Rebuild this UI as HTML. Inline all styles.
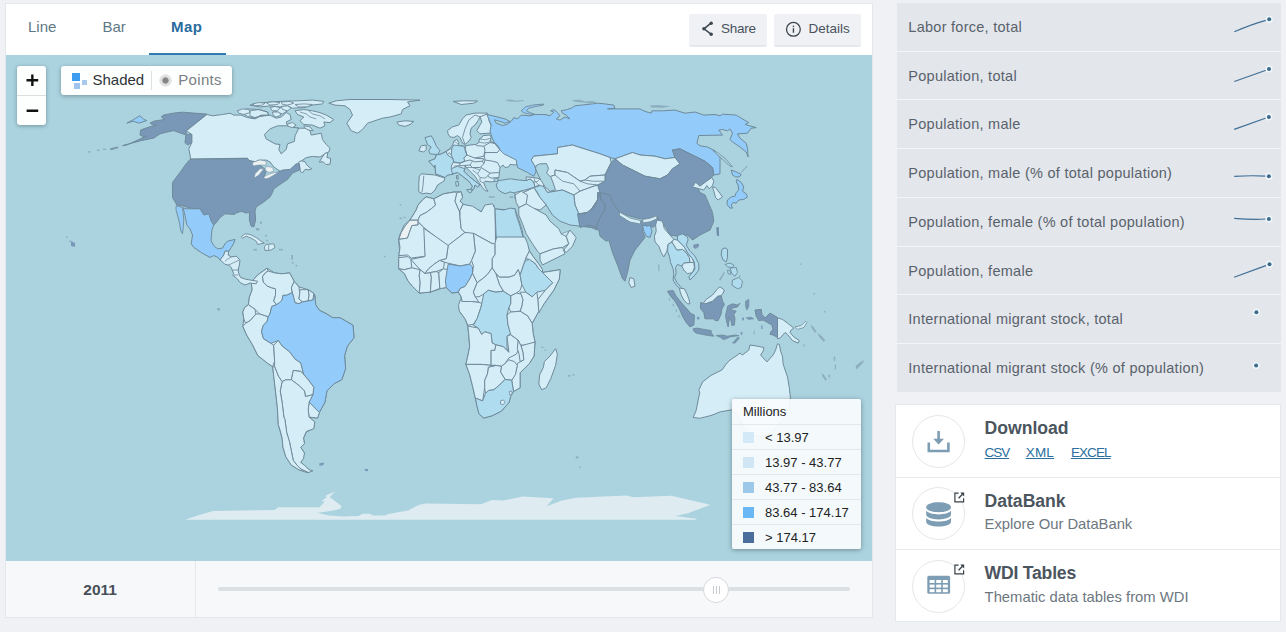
<!DOCTYPE html>
<html><head><meta charset="utf-8"><title>World Bank Data</title>
<style>
*{box-sizing:border-box;margin:0;padding:0}
html,body{width:1286px;height:632px;overflow:hidden}
body{background:#eff1f5;font-family:"Liberation Sans",sans-serif;position:relative;color:#4a5560}
.abs{position:absolute}
.t{position:absolute;white-space:nowrap;line-height:1}
#chart{position:absolute;left:5px;top:3px;width:868px;height:615px;background:#fff;border:1px solid #e3e6ea}
#map{position:absolute;left:6px;top:55px;width:866px;height:506px;background:#aad3df;overflow:hidden}
#timeline{position:absolute;left:6px;top:561px;width:866px;height:56px;background:#f7f8fa}
.btn{position:absolute;top:14px;height:33px;background:#eff1f5;border-bottom:2px solid #e4e7ec;border-radius:2px}
.row{position:absolute;left:897px;width:384px;background:#e3e6eb}
.row .t{left:11.3px;font-size:14.5px;letter-spacing:.27px;color:#59626c}
#cards{position:absolute;left:895px;top:404px;width:386px;height:218px;background:#fff;border:1px solid #e4e7eb}
.circ{position:absolute;width:53px;height:53px;border-radius:50%;border:1px solid #e3e6e9;background:#fff}
.h{font-weight:700;color:#4b555e}
.sub{font-size:14.8px;color:#6d7780}
a.l{position:absolute;white-space:nowrap;line-height:1;color:#2a6f9e;text-decoration:underline;font-size:13.5px;text-underline-offset:1px}
#legend{position:absolute;left:732px;top:399px;width:129px;height:150px;background:rgba(250,252,253,.93);box-shadow:0 1px 5px rgba(0,0,0,.35);border-radius:2px;font-size:13px;color:#222}
#legend .lr{position:absolute;left:0;width:129px;height:25px;border-top:1px solid #e3e8ec}
#legend .sw{position:absolute;left:11px;top:6.5px;width:11px;height:11px}
#legend .lt{position:absolute;left:33px;top:5.5px;white-space:nowrap;line-height:1}
</style></head><body>

<div id="chart"></div>
<div class="t" style="left:28px;top:18.6px;font-size:15px;color:#607885">Line</div>
<div class="t" style="left:102.5px;top:18.6px;font-size:15px;color:#607885">Bar</div>
<div class="t" style="left:171px;top:18.6px;font-size:15px;font-weight:700;color:#2a6c9c;letter-spacing:.5px">Map</div>
<div class="abs" style="left:149px;top:53px;width:77px;height:2px;background:#2f7ab0"></div>
<div class="btn" style="left:689px;width:78px"></div>
<div class="btn" style="left:774px;width:87px"></div>
<svg class="abs" style="left:700px;top:20px" width="16" height="18" viewBox="0 0 16 18"><g fill="#3f4850" stroke="#3f4850"><path d="M11 3.2 L4 8.8 L11 14.2" fill="none" stroke-width="1.5"/><circle cx="11.2" cy="3.3" r="1.7" stroke="none"/><circle cx="3.9" cy="8.8" r="1.7" stroke="none"/><circle cx="11.2" cy="14.2" r="1.7" stroke="none"/></g></svg>
<div class="t" style="left:721px;top:21.5px;font-size:13.5px;color:#4a535c;letter-spacing:-.25px">Share</div>
<svg class="abs" style="left:784px;top:20px" width="19" height="19" viewBox="0 0 19 19"><circle cx="9.4" cy="9.3" r="6.9" fill="none" stroke="#3f4850" stroke-width="1.3"/><rect x="8.75" y="8.2" width="1.4" height="4.6" fill="#3f4850"/><rect x="8.75" y="5.7" width="1.4" height="1.4" fill="#3f4850"/></svg>
<div class="t" style="left:808.5px;top:21.5px;font-size:13.5px;color:#4a535c">Details</div>
<div id="map">
<svg width="866" height="506" viewBox="6 55 866 506" style="position:absolute;left:0;top:0" stroke-linejoin="round">
<polygon points="426.1,196.9 422.4,200 418.1,205.1 416.2,209.9 409.9,220 404.3,224.9 399.6,235.2 398.7,239.8 399.6,251 398.7,257.6 398.7,268.8 404.3,273.4 408,280.9 412.7,286.5 419.2,293.1 430.4,292.1 441.6,288.4 446.3,287.5 451.9,293.1 458.4,292.1 461.2,296.8 460.3,307.1 459.4,311.2 465,318.6 467.8,326.1 468.7,333.6 469.7,346.7 467.8,356 465.9,364.4 469.7,374.7 472.5,385.9 475.3,398 477.1,406.4 479,413.9 483.7,418 492.1,415.8 501.4,411.1 508.9,402.7 510.7,396.2 513.5,391.5 520.1,387.8 520.1,372.8 529.4,363.5 534.1,356 535,342 533.2,333.6 532.2,323.3 538.8,311.2 544.4,303.3 553.7,290.3 559.3,279 560.2,269.7 542.5,272.5 542.5,269.7 538.8,264.1 533.2,256.6 529.4,251 526.8,243.6 523.4,237 522.3,230.5 518.6,219.3 516.7,213.7 514.9,208.4 510.7,209.9 494.9,209 493.9,205.3 486.5,206.2 481.8,211.8 473.4,208.1 463.1,204.3 459.9,201.2 462.6,197.4 461.2,191.8 454.9,191.8 443.7,193.7 433.8,198.7" fill="#d5edf7" stroke="#6f8a9a" stroke-width="1"/>
<polygon points="251.2,282.2 257.8,274.8 267.1,268.2 274.6,272.9 282.1,273.8 289.5,272.9 294.2,281.3 298.9,286.9 308.2,289.7 313.8,293.4 314.8,295.3 315.7,304.7 319.4,310.3 326.9,314 332.5,317.7 340,317.7 353,325.2 354,337.7 347.4,346.1 344.6,355.5 345.6,368.5 341.8,379.7 334.4,383.5 326.9,390.9 325,402.1 319.4,412.4 317.6,418 309.1,417.1 314.8,421.8 313.8,428.3 306.3,432 303.5,438 304.5,443.6 300.7,447.3 304.5,453 300.7,462.3 309.1,469.8 308.2,472.6 298.9,469.8 291.4,465.1 285.8,456.7 283,447.3 282.1,438 278.3,424.6 277.4,407.8 275.5,390.9 272.7,366.7 267.1,362.9 257.8,355.5 252.2,344.2 246.6,334.9 242.8,326.1 243.8,318.7 242.8,312.1 244.7,307.5 248.4,304.7 249.4,297.2 252.2,289.7" fill="#d5edf7" stroke="#6f8a9a" stroke-width="1"/>
<polygon points="206.9,114.1 182.5,112.2 173.8,113.1 163.8,115 161.2,116.9 165,119.4 153.8,121.2 150,123.1 152.5,124.8 156.2,125 147.5,127.5 140.6,130 140,135 143.1,136.5 146.2,136.2 126.9,145 122.5,145.6 141.2,140.6 153.8,138.1 160,133.8 167.5,131.9 173.8,130.6 182.5,133.8 185,134.4 191.9,134.4 191.9,142.5 187.5,145 185,142.5 186.2,133.1 186.2,130.6" fill="#7998b7" stroke="#6f8a9a" stroke-width="1"/>
<polygon points="140,115.6 143.8,119.4 146.9,120.6 138.8,123.1 133.1,121.2 126.9,123.1 133.8,119.4" fill="#93ccfa" stroke="#6f8a9a" stroke-width="1"/>
<polygon points="110,148.8 117.5,146.9 118.1,147.8 111.2,149.8" fill="#7998b7" stroke="#6f8a9a" stroke-width="0.6"/>
<polygon points="206.9,114.5 212.5,115.8 222.5,114.5 230,113.2 233.8,115.1 241.2,115.1 247.5,117.6 255,118.9 260,116.4 270,115.1 276.2,118.2 281.2,117 286.2,112.6 290,114.5 291.2,119.5 286.2,122 287.5,125.8 295,127.6 298.8,128.2 306.2,128.2 310,130.8 311.2,135.1 317.5,133.9 321.2,133.2 322.5,139.5 326.2,144.5 330,148.2 328.8,152 323.8,154.5 320,157 312.5,156.4 306.2,157.6 300,162 298.8,163.2 300,167 291.9,172 281.2,172 273.8,167 270,162 266.2,160.1 258.8,160.1 255,162 248.8,160.8 247.5,158.2 190.6,159 190,155 188.8,148.8 191.9,142.5 191.9,134.4 186.2,131" fill="#d5edf7" stroke="#6f8a9a" stroke-width="1"/>
<polygon points="277.5,125.8 270,128.9 264.4,134.5 266.2,138.9 275,143.9 280,144.5 278.8,149.5 281.2,153.9 286.2,149.5 287.5,143.9 294.4,141.4 295,135.8 298.8,128.2 295,127.6 287.5,125.8" fill="#aad3df" stroke="#6f8a9a" stroke-width="1"/>
<polygon points="237.5,110.8 247.5,108.9 258.8,109.5 267.5,112 268.8,115.1 261.2,115.1 255,118.2 247.5,116.4 241.2,112.6" fill="#d5edf7" stroke="#6f8a9a" stroke-width="1"/>
<polygon points="250,105.1 260,103.2 270,102 280,101.4 297.5,100.8 312.5,100.1 323.8,101.4 322.5,103.9 312.5,105.1 303.8,107.6 292.5,108.2 287.5,105.8 280,107 270,105.8 260,107" fill="#d5edf7" stroke="#6f8a9a" stroke-width="1"/>
<polygon points="295,110.8 303.8,109.5 312.5,110.8 320,112.6 326.2,115.1 333.8,119.5 330,122.6 323.8,122 325,125.8 320,128.2 312.5,125.1 303.8,124.5 300,120.8 303.8,117 297.5,114.5" fill="#d5edf7" stroke="#6f8a9a" stroke-width="1"/>
<polygon points="275,108.2 282.5,107.6 287.5,110.8 282.5,113.9 276.2,112" fill="#d5edf7" stroke="#6f8a9a" stroke-width="1"/>
<polygon points="321.7,158 325,153.2 327.9,152.7 326.9,157.5 330.7,158.4 330.2,164.1 326,164.6 323.1,161.7 319.3,162.2" fill="#d5edf7" stroke="#6f8a9a" stroke-width="1"/>
<polygon points="298.5,162.2 301.3,160.8 305.1,161.7 306.5,164.6 309.4,167.4 311.7,168.9 308.9,169.8 305.1,169.3 302.7,172.7 300.4,171.7 299.9,167.4" fill="#d5edf7" stroke="#6f8a9a" stroke-width="1"/>
<polygon points="190,159.4 247.5,158.5 249.4,160.6 256.2,161.9 262.5,166.9 264.4,168.8 266.2,171.9 263.8,176.9 266.2,178.8 272.5,175 277.5,172.5 282.5,170 290,169.4 296.2,163.8 299.4,163.8 299.4,170 292.5,173.1 287.5,179.4 280,184.4 273.8,188.8 272.5,192.5 270,196.9 263.8,201.9 256.2,206.9 255,211.2 255.6,220 253.8,226.9 251.2,226.2 249.4,220 249.4,211.9 246.2,213.1 241.2,211.2 236.2,213.1 234.4,214.4 225,213.8 220,217.5 216.2,222.5 213.8,225 211.2,223.1 208.8,215.6 203.8,215 200,208.8 190,208.1 183.8,206.2 176.9,205 172.5,197.5 172.5,182.5 180,172.5 186.2,163.8" fill="#7998b7" stroke="#6f8a9a" stroke-width="1"/>
<polygon points="252.5,162.5 260,160 266.2,161.2 266.2,165 258.8,165 253.1,166" fill="#ebf1f3" stroke="#6f8a9a" stroke-width="0.5"/>
<polygon points="255,173.8 260,168.8 263.8,168.8 258.8,175 254.4,178.1" fill="#ebf1f3" stroke="#6f8a9a" stroke-width="0.5"/>
<polygon points="266.2,166.2 272.5,167.5 273.8,171.2 268.8,172.5 265,170" fill="#ebf1f3" stroke="#6f8a9a" stroke-width="0.5"/>
<polygon points="263.8,176.9 270,173.8 277.5,171.9 276.2,173.8 268.8,178.1 265,179" fill="#ebf1f3" stroke="#6f8a9a" stroke-width="0.5"/>
<polygon points="328.8,103.2 336.2,100.8 350,99.5 390,99.5 420,100.1 407.5,102 410,105.8 402.5,109.5 401.2,113.9 390,117 382.5,118.2 367.5,123.2 362.5,129.5 357.5,133.2 351.2,130.8 346.9,123.2 352.5,115.1 350,109.5 345,105.8 335,105.1" fill="#d5edf7" stroke="#6f8a9a" stroke-width="1"/>
<polygon points="396.9,122 405,120.8 413.8,121.4 410,124.5 405,126.4 398.8,125.1" fill="#d5edf7" stroke="#6f8a9a" stroke-width="1"/>
<polygon points="453.1,101.4 463.8,100.8 477.5,101 473.8,103.2 461.2,104.5" fill="#d5edf7" stroke="#6f8a9a" stroke-width="1"/>
<polygon points="425,137.6 431.2,135.8 433.8,140.1 436.2,145.8 440,150.8 437.5,154.5 430,153.9 428.8,150.8 431.2,147 427.5,144.5 426.2,140.8" fill="#b0dcf0" stroke="#6f8a9a" stroke-width="1"/>
<polygon points="418.8,150.8 421.2,145.8 426.2,145.1 426.2,149.5 423.8,152" fill="#d5edf7" stroke="#6f8a9a" stroke-width="1"/>
<polygon points="447.5,130.6 452.5,126.9 458.8,125 462.5,118.8 466.2,115 475,113.1 487.5,113.1 485,116.2 480,116.9 478.1,120.6 475,125 471.2,128.1 470,133.8 471.2,137.5 468.8,141.2 465,144.4 462.5,143.1 460,137.5 457.5,135.6 453.8,137.5 450,136.9 448.1,133.8" fill="#d5edf7" stroke="#6f8a9a" stroke-width="1"/>
<polygon points="480,116.9 487.5,113.8 490,116.2 488.8,120 492.5,128.8 490,133.1 480,133.8 476.9,130.6 480,125 481.9,121.9" fill="#d5edf7" stroke="#6f8a9a" stroke-width="1"/>
<polygon points="428.8,161.2 435,158.8 436.2,155 441.2,154 446.2,151.2 451.2,147.5 453.1,143.8 453.8,141.2 456.9,139.4 458.8,142.5 458.1,145.6 463.8,146.2 468.8,145.2 476.2,144.4 478.8,142.5 479.4,138.8 481.9,137.5 483.1,135.6 490,135 491.2,137.5 490,141.2 495,143.1 500,148.8 502.5,151.2 510,153.8 517.5,158.1 518.8,161.2 516.2,165 510,164.4 508.8,166.9 505,167.5 503.1,165 500,167.5 499.4,172.5 499,177.5 497.5,178.8 498.1,180.6 491.2,181.9 485,181.2 483.8,183.1 486.2,188.8 488.1,191.2 485,190.6 482.5,187.5 480,183.8 478.1,181.2 475,176.2 471.2,172.5 466.2,167.5 465,165 465,168.8 463.8,171.2 468.8,176.2 475,181.2 480,185 477.5,186.9 475,185 473.8,188.8 470,191.2 472.5,186.2 468.8,181.2 462.5,176.2 457.5,172.5 452.5,173.8 447.5,175 445,177.5 435.6,173.8 435,165 434.4,167.5" fill="#d5edf7" stroke="#6f8a9a" stroke-width="1"/>
<polygon points="428.8,161.2 435,158.8 436.2,155 441.2,154 446.2,151.5 447.5,155 451.2,157.5 453.8,160 453.1,162.5 451.2,166.2 452.5,170 453.1,174.4 447.5,175 445,177.5 435.6,173.8 435,165 434.4,167.5" fill="#b0dcf0" stroke="#6f8a9a" stroke-width="1"/>
<polygon points="451.9,148.1 453.8,145 458.1,145.6 463.8,146.2 465.6,150 466.9,155 463.8,158.1 465,161.2 460,163.1 453.8,161.9 453.1,158.8 451.2,155" fill="#b0dcf0" stroke="#6f8a9a" stroke-width="1"/>
<polygon points="452.5,173.8 451.2,168.8 457.5,166.2 465,168.8 463.8,171.2 468.8,176.2 475,181.2 480,185 477.5,186.9 475,185 473.8,188.8 470,191.2 472.5,186.2 468.8,181.2 462.5,176.2 457.5,172.5" fill="#b0dcf0" stroke="#6f8a9a" stroke-width="1"/>
<polygon points="466.9,189.4 472.5,190 470.6,193.1 467.5,191.2" fill="#b0dcf0" stroke="#6f8a9a" stroke-width="1"/>
<polygon points="455.6,181.9 458.1,181.2 458.8,185.6 456.2,186.2" fill="#b0dcf0" stroke="#6f8a9a" stroke-width="1"/>
<polygon points="456.5,175.6 458.1,175.6 458.1,179.4 456.5,178.8" fill="#b0dcf0" stroke="#6f8a9a" stroke-width="1"/>
<polygon points="419.4,176.2 421.2,173.8 435,175 445,178.1 443.8,181.2 437.5,185 435,190 431.2,193.8 426.2,193.1 422.5,193.8 418.8,191.9 418.8,182.5" fill="#d5edf7" stroke="#6f8a9a" stroke-width="1"/>
<polygon points="486.9,114.5 495,116.4 505,118.9 510,121.4 505,123.2 498.8,121 494.4,119.8 496.2,123.2 502.5,125.5 506.9,124.5 511.2,121.4 513.8,117.6 517.5,118.9 521.2,115.1 530,115.8 535,114.5 538.8,114.5 545,114.5 550,115.8 553.8,112 550.6,110.8 553.8,109.5 557.5,112.6 560,115.8 556.2,118.9 560,120.1 565,117 570,118.9 566.2,115.1 562.5,113.2 561.2,110.8 567.5,109.5 572.5,107.6 575,105.8 592.5,103.9 597.5,103.2 605,103.9 613.8,105.1 615,108.2 607.5,108.9 640,108.9 645,111.4 651.2,113.2 651.9,110.8 662.5,110.8 675,110.1 685,113.2 695,112 703.8,115.1 715,114.5 720,115.8 722.5,114.2 736.2,115.1 741.2,118.2 748.8,122.6 745,124.5 756.2,127.6 751.2,128.2 747.5,133.2 737.5,133.9 740,138.2 746.2,143.2 747.5,148.2 748.1,157 746.2,152 740,147 732.5,142 730,139.5 732.5,133.2 730,128.9 727.5,130.8 722.5,129.5 718.8,130.1 722.5,135.1 698.8,135.5 696.9,143.2 700,145.8 707.5,147 715,150.8 720,157.5 720,173.8 713.8,175 712.5,167.5 705,161.2 692.5,155 680,148.8 672.5,150 675,157.5 665,158.8 655,156.2 640,155 632.5,152.5 615,158.8 610,157.5 600,153.8 580,147.5 572.5,145 557.5,147.5 557.5,153.8 533.8,156.2 531.2,160 535,166.2 536.2,171.2 533.8,176.2 527.5,172.5 517.5,167.5 516.2,160 503.8,153.8 500,150 495,143.8 492.5,138.8 490,131.2 491.2,125" fill="#93ccfa" stroke="#6f8a9a" stroke-width="1"/>
<polygon points="533.8,156.2 557.5,153.8 557.5,147.5 572.5,145 580,147.5 600,153.8 610,157.5 611.2,162.5 607.5,170 605,175 590,176.2 585,180 580,181.2 567.5,172.5 555,170 555,175 547.5,177.5 542.5,171.2 536.2,171.2 535,166.2 531.2,160" fill="#d5edf7" stroke="#6f8a9a" stroke-width="1"/>
<polygon points="615,158.8 632.5,152.5 640,155 655,156.2 665,158.8 675,157.5 680,163.8 672.5,168.8 667.5,175 660,178.8 645,176.2 635,171.2 622.5,165" fill="#d5edf7" stroke="#6f8a9a" stroke-width="1"/>
<polygon points="611.2,162.5 615,158.8 622.5,165 635,171.2 645,176.2 660,178.8 667.5,175 672.5,168.8 680,163.8 675,157.5 672.5,150 680,148.8 692.5,155 705,161.2 712.5,167.5 713.8,175 710,178.8 702.5,185 697.5,187.5 700,192.5 705,195 712.5,212.5 713.8,221.2 710,230 700,235 692.5,240 687.5,235 677.5,236.2 670,235 665,226.2 660,222.5 655,216.2 650,220 640,218.8 630,216.2 620,212.5 613.8,205 607.5,197.5 600,192.5 597.5,185 605,181.2 605,175 607.5,170" fill="#7998b7" stroke="#6f8a9a" stroke-width="1"/>
<polygon points="542.5,171.2 547.5,177.5 555,175 555,170 567.5,172.5 580,181.2 585,180 590,176.2 605,175 605,181.2 597.5,185 590,187.5 580,191.2 573.8,195 562.5,190 547.5,192.5 542.5,185 545,177.5" fill="#d5edf7" stroke="#6f8a9a" stroke-width="1"/>
<polygon points="573.8,195 580,191.2 590,187.5 597.5,185 600,192.5 597.5,200 592.5,207.5 587.5,212.5 578.8,213.8 575,205" fill="#d5edf7" stroke="#6f8a9a" stroke-width="1"/>
<polygon points="533.8,187.5 542.5,185 547.5,192.5 562.5,190 573.8,195 575,205 578.8,213.8 580,226.2 570,225 560,221.2 552.5,215 546.2,205 540,197.5 537.5,192.5" fill="#b0dcf0" stroke="#6f8a9a" stroke-width="1"/>
<polygon points="578.8,213.8 587.5,212.5 592.5,207.5 597.5,200 597.5,192.5 600,192.5 605,200 603.8,210 605,217.5 598.8,223.8 597.5,230 591.2,227.5 580,226.2" fill="#7998b7" stroke="#6f8a9a" stroke-width="1"/>
<polygon points="498.1,180.6 502.5,180 510,178.8 518.8,180 526.2,180.6 530,178.8 533.8,181.9 535,186.9 533.1,191.2 526.2,191.9 520,192.5 515,193.1 510,191.9 505,193.8 500,191.2 497.5,188.8 496.2,185 497.5,182.5" fill="#b0dcf0" stroke="#6f8a9a" stroke-width="1"/>
<polygon points="494,178.8 497.5,178.5 498.1,180.6 496.2,181.5 494,180.6" fill="#b0dcf0" stroke="#6f8a9a" stroke-width="0.8"/>
<polygon points="520,193.8 533.8,187.5 540,197.5 546.2,205 540,210 530,207.5 522.5,201.2" fill="#d5edf7" stroke="#6f8a9a" stroke-width="1"/>
<polygon points="515,192.5 525,190 533.8,187.5 520,193.8 517.5,200 515,198.8" fill="#d5edf7" stroke="#6f8a9a" stroke-width="1"/>
<polygon points="521.2,110.8 525.6,106.8 533.8,104.9 543.8,104.1 543.1,105.2 535,106.6 528.1,108.5 526.5,110.8 530,112.6 535,114.5 530,114.1 523.8,112.8" fill="#93ccfa" stroke="#6f8a9a" stroke-width="0.9"/>
<polygon points="505,100.1 511.2,99.5 516.2,100.8 522.5,100.1 524.4,101 517.5,101.8 508.8,101.4" fill="#8eaebf"/>
<polygon points="571.2,100.1 580,99.8 585,101.4 592.5,101 597.5,102.6 590,103.6 582.5,102.6 575,101.8" fill="#8eaebf"/>
<polygon points="650,105.5 657.5,105 671.2,106.2 662.5,107.8 651.2,107.5" fill="#8eaebf"/>
<polygon points="577.5,213.8 585,213.8 593.8,207.5 597.5,200 600,192.5 601.2,200 605,203.8 605,210 600,217.5 596.2,227.5 588.8,225 580,227.5" fill="#7998b7" stroke="#6f8a9a" stroke-width="1"/>
<polygon points="600,192.5 610,195 612.5,202.5 620,212.5 630,218.8 640,221.2 650,220 657.5,216.2 658.8,220 656.2,225 652.5,227.5 650,225 647.5,227.5 643.8,225 642.5,231.2 645,237.5 640,243.8 635,250 630,260 627.5,272.5 625,281.2 622.5,278.8 617.5,265 612.5,252.5 608.8,240 606.2,241.2 600,236.2 598.8,230 596.2,227.5 600,217.5 605,210 605,203.8 601.2,200" fill="#7998b7" stroke="#6f8a9a" stroke-width="1"/>
<polygon points="619.5,212 630,218 640.5,220.5 640.5,224 630,222 619.5,215.5" fill="#d5edf7" stroke="#6f8a9a" stroke-width="0.8"/>
<polygon points="642.5,219.5 650,218.2 656.8,215.8 656.8,219 650,221.8 643.2,223" fill="#d5edf7" stroke="#6f8a9a" stroke-width="0.8"/>
<polygon points="642.5,225 647.5,226.2 650,225 652,231.2 650,237.5 646.2,236.2 643.8,231.2" fill="#93ccfa" stroke="#6f8a9a" stroke-width="1"/>
<polygon points="630,277.5 633.8,278.8 635,286.2 631.2,287.5 628.8,282.5" fill="#d5edf7" stroke="#6f8a9a" stroke-width="1"/>
<polygon points="518.8,207.5 526.2,203.8 532.5,207.5 546.2,215 550,221.2 558.8,228.8 561.2,233.8 566.2,236.2 568.8,243.8 562.5,247.5 553.8,248.8 540,253.8 537.5,251.2 532.5,243.8 526.2,233.8 522.5,223.8 518.8,215" fill="#d5edf7" stroke="#6f8a9a" stroke-width="1"/>
<polygon points="540,253.8 553.8,248.8 562.5,247.5 565,253.8 550,261.2 542.5,265 540,260" fill="#d5edf7" stroke="#6f8a9a" stroke-width="1"/>
<polygon points="568.8,243.8 566.2,236.2 570,230 576.2,237.5 572.5,246.2 566.2,252.5 563.8,250" fill="#d5edf7" stroke="#6f8a9a" stroke-width="1"/>
<polygon points="561.2,233.8 568.8,231.2 566.2,236.2" fill="#d5edf7" stroke="#6f8a9a" stroke-width="0.7"/>
<polygon points="515,195 521.2,191.2 527.5,195 526.2,203.8 518.8,207.5 516.2,202.5" fill="#d5edf7" stroke="#6f8a9a" stroke-width="1"/>
<polygon points="410,220 418.1,220 418.1,225 411.9,225.6 409.4,232.5 407.5,238.1 398.8,239.4 401.2,232.5 405,226.2" fill="#ebf1f3" stroke="#6f8a9a" stroke-width="1"/>
<polygon points="426.2,196.9 433.8,198.8 435.6,205 431.2,208.8 426.2,212.5 420,215.6 418.1,220 410,220 416.2,210 418.1,205 422.5,200" fill="#d5edf7" stroke="#6f8a9a" stroke-width="1"/>
<polygon points="433.8,198.8 443.8,193.8 455,191.9 456.9,193.8 455,201.2 459.4,211.2 460,217.5 461.2,228.8 465,232.5 447.5,246.2 423.8,227.5 418.1,221.9 418.1,220 420,215.6 426.2,212.5 431.2,208.8 435.6,205" fill="#d5edf7" stroke="#6f8a9a" stroke-width="1"/>
<polygon points="456.9,192.5 461.2,191.9 462.5,197.5 460,201.2 463.1,203.8 460,210.6 459.4,211.2 455,201.2" fill="#d5edf7" stroke="#6f8a9a" stroke-width="1"/>
<polygon points="460,210.6 463.1,204.4 472.5,206.2 481.2,211.9 485,205 492.5,203.8 495,208.8 495.6,243.8 493.8,244.4 474.4,233.8 471.2,235 465,232.5 461.2,228.8 460,217.5" fill="#d5edf7" stroke="#6f8a9a" stroke-width="1"/>
<polygon points="495,208.8 503.8,210 510,208.1 515,208.8 516.2,215 520,226.2 523.1,237.5 496.2,237.5" fill="#b0dcf0" stroke="#6f8a9a" stroke-width="1"/>
<polygon points="496.7,237 524.8,237 527.6,243.6 529.4,251 525.7,258.5 523.8,264.1 520.1,275.3 518.2,269.7 514.5,275.3 508.9,277.2 499.5,277.2 495.8,273.4 492.1,267.8 492.1,258.5 494.9,254.8 494.9,243.6" fill="#d5edf7" stroke="#6f8a9a" stroke-width="1"/>
<polygon points="495.8,273.4 499.5,277.2 508.9,277.2 514.5,275.3 518.2,269.7 520.1,275.3 521.9,284.7 520.1,290.3 516.3,293.1 510.7,295.9 503.3,291.2 499.5,284.7" fill="#d5edf7" stroke="#6f8a9a" stroke-width="1"/>
<polygon points="473.4,233.3 492.1,243.6 494.9,243.6 494.9,254.8 492.1,258.5 492.1,267.8 488.3,273.4 484.6,277.2 477.1,282.8 472.5,273.4 473.4,266 471.5,260.4 475.3,251" fill="#d5edf7" stroke="#6f8a9a" stroke-width="1"/>
<polygon points="448.2,245.4 465,232.4 473.4,233.3 475.3,251 471.5,260.4 469.7,264.1 460.3,266 448.2,263.2 444.4,262.2 439.8,260.4 446.3,258.5" fill="#d5edf7" stroke="#6f8a9a" stroke-width="1"/>
<polygon points="423,227.7 448.2,245.4 446.3,258.5 439.8,260.4 434.2,264.1 428.6,268.8 424.8,273.4 420.2,269.7 410.8,259.4 424.8,256.6" fill="#d5edf7" stroke="#6f8a9a" stroke-width="1"/>
<polygon points="398.8,239.4 407.5,238.1 409.4,232.5 411.9,225.6 418.1,225 418.1,221.9 423.8,227.5 425,256.2 411.2,258.1 407.5,255 398.8,255.6 400,247.5" fill="#d5edf7" stroke="#6f8a9a" stroke-width="1"/>
<polygon points="398.7,257.6 408,256.6 410.8,259.4 411.8,267.8 404.3,269.7 398.7,268.8" fill="#d5edf7" stroke="#6f8a9a" stroke-width="1"/>
<polygon points="398.7,268.8 404.3,269.7 411.8,267.8 420.2,269.7 419.2,275.3 420.2,282.8 419.2,293.1 412.7,286.5 408,280.9 404.3,273.4" fill="#d5edf7" stroke="#6f8a9a" stroke-width="1"/>
<polygon points="420.2,269.7 424.8,273.4 430.4,272.5 431.4,277.2 430.4,292.1 419.2,293.1 420.2,282.8 419.2,275.3" fill="#d5edf7" stroke="#6f8a9a" stroke-width="1"/>
<polygon points="424.8,273.4 428.6,268.8 434.2,264.1 439.8,260.4 444.4,262.2 443.5,268.8 436,271.6 430.4,272.5" fill="#d5edf7" stroke="#6f8a9a" stroke-width="1"/>
<polygon points="430.4,272.5 436,271.6 438.8,272.5 439.8,288.4 430.4,292.1 431.4,277.2" fill="#d5edf7" stroke="#6f8a9a" stroke-width="1"/>
<polygon points="438.8,272.5 443.5,268.8 448.2,269.7 446.3,287.5 441.6,288.4 439.8,288.4" fill="#d5edf7" stroke="#6f8a9a" stroke-width="1"/>
<polygon points="448.2,264.1 460.3,266 469.7,264.1 472.5,266.9 472.5,273.4 469.7,279 465,286.5 460.3,288.4 458.4,292.1 451.9,293.1 446.3,287.5 445.4,280.9 447.2,269.7" fill="#93ccfa" stroke="#6f8a9a" stroke-width="1"/>
<polygon points="472.5,273.4 477.1,282.8 473.4,292.1 475.3,296.8 479,302.4 471.5,301.5 462.2,301.5 461.2,296.8 458.4,292.1 460.3,288.4 465,286.5 469.7,279" fill="#d5edf7" stroke="#6f8a9a" stroke-width="1"/>
<polygon points="477.1,282.8 484.6,277.2 488.3,273.4 492.1,267.8 495.8,273.4 499.5,284.7 503.3,291.2 495.8,292.1 488.3,290.3 483.7,294 479,296.8 475.3,296.8 473.4,292.1" fill="#d5edf7" stroke="#6f8a9a" stroke-width="1"/>
<polygon points="525.7,260.4 529.4,259.4 535,263.2 538.8,268.8 542.5,272.5 552.8,282.8 545.3,290.3 536.9,292.1 532.2,296.8 525.7,292.1 521.9,284.7 520.1,275.3 523.8,264.1" fill="#b0dcf0" stroke="#6f8a9a" stroke-width="1"/>
<polygon points="525.7,258.5 529.4,251 533.2,256.6 538.8,264.1 542.5,269.7 542.5,272.5 538.8,268.8 535,263.2 529.4,259.4" fill="#d5edf7" stroke="#6f8a9a" stroke-width="1"/>
<polygon points="542.5,272.5 560.2,269.7 559.3,279 553.7,290.3 544.4,303.3 538.8,313 537.8,299.6 545.3,290.3 552.8,282.8" fill="#d5edf7" stroke="#6f8a9a" stroke-width="1"/>
<polygon points="520.1,292.2 525.7,292.2 532.2,296.8 536.9,292.2 537.8,299.6 538.8,311.2 532.2,323.3 527.6,315.9 520.1,311.2 521.9,305.6 522.9,299.6" fill="#d5edf7" stroke="#6f8a9a" stroke-width="1"/>
<polygon points="510.7,295.9 516.3,293.1 521,294 522.9,299.6 521.9,305.6 520.1,311.2 510.7,312.1 508.9,307.5 510.7,303.4" fill="#d5edf7" stroke="#6f8a9a" stroke-width="1"/>
<polygon points="460.3,300 462.2,301.5 471.5,301.5 479,302.4 481.8,303.4 480.9,307.5 477.1,318.7 473.4,324.3 467.8,325.2 465,318.7 459.4,311.2 458.4,305.6" fill="#d5edf7" stroke="#6f8a9a" stroke-width="1"/>
<polygon points="483.7,294 488.3,290.3 495.8,292.2 503.3,291.2 510.7,295.9 510.7,303.4 508.9,307.5 507,314.9 507.9,324.3 510.7,333.6 507,336.4 507,348.6 508.9,352.3 503.3,346.7 495.8,344.8 492.1,343 491.1,333.6 484.6,331.8 481.8,334.6 478.1,328 473.4,325.2 477.1,318.7 480.9,307.5 481.8,303.4" fill="#b0dcf0" stroke="#6f8a9a" stroke-width="1"/>
<polygon points="467.8,326.1 478.1,328 481.8,334.6 484.6,331.8 491.1,333.6 492.1,343 495.8,344.8 494.9,350.4 491.1,350.4 491.1,365.4 481.8,364.4 465.9,364.4 467.8,356 469.7,346.7 468.7,333.6" fill="#d5edf7" stroke="#6f8a9a" stroke-width="1"/>
<polygon points="495.8,344.8 503.3,346.7 508.9,352.3 507,336.4 510.7,334.6 518.2,340.2 519.1,348.6 516.3,354.2 508.9,357.9 505.1,363.5 501.4,366.3 495.8,365.4 491.1,365.4 491.1,350.4 494.9,350.4" fill="#d5edf7" stroke="#6f8a9a" stroke-width="1"/>
<polygon points="510.7,312.1 520.1,311.2 527.6,315.9 532.2,323.3 533.2,333.6 535,342 527.6,345.8 520.1,344.8 518.2,340.2 510.7,334.6 507.9,324.3 507,314.9" fill="#d5edf7" stroke="#6f8a9a" stroke-width="1"/>
<polygon points="521,345.8 535,342 534.1,356 529.4,363.5 520.1,372.8 520.1,387.8 513.5,391.5 511.7,380.3 516.3,371 517.3,363.5 523.8,359.8 522.9,352.3" fill="#d5edf7" stroke="#6f8a9a" stroke-width="1"/>
<polygon points="518.2,340.2 521,345.8 522.9,352.3 523.8,359.8 520.1,361.6 519.1,354.2 517.3,348.6" fill="#d5edf7" stroke="#6f8a9a" stroke-width="1"/>
<polygon points="501.4,366.3 505.1,363.5 508.9,359.8 514.5,361.6 517.3,365.4 515.4,374.7 511.7,380.3 505.1,379.4 500.5,371.9" fill="#d5edf7" stroke="#6f8a9a" stroke-width="1"/>
<polygon points="488.3,367.2 495.8,365.4 501.4,366.3 500.5,371.9 505.1,379.4 499.5,385 493.9,389.7 488.3,390.6 485.5,393.4 484.6,387.8 484.6,380.3 487.4,373.8" fill="#d5edf7" stroke="#6f8a9a" stroke-width="1"/>
<polygon points="465.9,364.4 481.8,364.4 491.1,365.4 495.8,365.4 488.3,367.2 487.4,373.8 484.6,380.3 484.6,387.8 482.7,400.9 475.3,398.1 472.5,385.9 469.7,374.7" fill="#d5edf7" stroke="#6f8a9a" stroke-width="1"/>
<polygon points="475.3,398.1 482.7,400.9 485.5,393.4 488.3,390.6 493.9,389.7 499.5,385 505.1,379.4 511.7,380.3 513.5,391.5 510.7,396.2 508.9,402.7 501.4,411.1 492.1,415.8 483.7,418 479,413.9 477.1,406.5" fill="#b0dcf0" stroke="#6f8a9a" stroke-width="1"/>
<polygon points="500.5,400.9 503.3,399.9 505.1,402.2 503.3,404.6 500.5,404" fill="#d5edf7" stroke="#6f8a9a" stroke-width="0.8"/>
<polygon points="509.2,391.5 511.7,391 512.2,393.9 509.8,394.9" fill="#d5edf7" stroke="#6f8a9a" stroke-width="0.8"/>
<polygon points="555.6,348.6 557.4,354.2 555.6,365.4 550.9,378.4 546.2,387.8 541.6,389.7 538.8,384 539.7,374.7 543.4,367.2 544.4,361.6 550,356" fill="#d5edf7" stroke="#6f8a9a" stroke-width="1"/>
<polygon points="251.2,282.2 257.8,274.8 267.1,268.2 268.1,271 265.3,272.9 262.5,276.6 263.4,282.2 267.1,286 271.8,287.8 275.5,288.8 275.5,295.3 273.7,300.9 276.5,304.7 271.8,306.5 269.9,314 268.1,316.8 259.7,314 255,309.3 248.4,304.7 249.4,297.2 252.2,289.7" fill="#d5edf7" stroke="#6f8a9a" stroke-width="1"/>
<polygon points="268.1,271 274.6,272.9 282.1,273.8 289.5,272.9 294.2,281.3 291.4,287.8 292.3,292.5 286.7,295.3 283,295.3 282.1,300 279.3,302.8 276.5,304.7 273.7,300.9 275.5,295.3 275.5,288.8 271.8,287.8 267.1,286 263.4,282.2 262.5,276.6 265.3,272.9" fill="#d5edf7" stroke="#6f8a9a" stroke-width="1"/>
<polygon points="294.2,281.3 298.9,286.9 299.8,293.4 298.9,299 302.6,301.9 298.9,303.7 295.1,302.8 293.3,297.2 291.4,287.8" fill="#d5edf7" stroke="#6f8a9a" stroke-width="1"/>
<polygon points="299.8,289.7 308.2,289.7 309.1,295.3 308.2,300.9 302.6,301.9 298.9,299 299.8,293.4" fill="#d5edf7" stroke="#6f8a9a" stroke-width="1"/>
<polygon points="308.2,289.7 313.8,293.4 312.9,300 308.2,300.9 309.1,295.3" fill="#d5edf7" stroke="#6f8a9a" stroke-width="1"/>
<polygon points="248.4,304.7 255,309.3 255.9,314 250.3,320.5 245.6,323.3 243.8,318.7 242.8,312.1 244.7,307.5" fill="#d5edf7" stroke="#6f8a9a" stroke-width="1"/>
<polygon points="245.6,323.3 250.3,320.5 255.9,314 259.7,314 268.1,316.8 267.1,321.5 263.4,325.2 261.5,331.2 263.4,338.6 270.9,343.3 273.7,345.2 274.6,361.1 272.7,366.7 267.1,362.9 257.8,355.5 252.2,344.2 246.6,334.9 242.8,326.1" fill="#d5edf7" stroke="#6f8a9a" stroke-width="1"/>
<polygon points="269.9,314 271.8,306.5 276.5,304.7 279.3,302.8 282.1,300 283,295.3 286.7,295.3 292.3,292.5 295.1,302.8 298.9,303.7 302.6,301.9 308.2,300.9 312.9,300 314.8,295.3 315.7,304.7 319.4,310.3 326.9,314 332.5,317.7 340,317.7 353,325.2 354,337.7 347.4,346.1 344.6,355.5 345.6,368.5 341.8,379.7 334.4,383.5 326.9,390.9 325,402.1 319.4,412.4 309.1,402.1 312.9,394.7 313.8,387.2 308.2,379.7 303.5,374.1 300.7,362.9 295.1,359.2 289.5,351.7 282.1,346.1 278.3,340.5 270.9,343.3 263.4,338.6 261.5,331.2 263.4,325.2 267.1,321.5 268.1,316.8" fill="#93ccfa" stroke="#6f8a9a" stroke-width="1"/>
<polygon points="273.7,345.2 278.3,340.5 282.1,346.1 289.5,351.8 295.1,359.2 300.7,363 303.5,374.2 300.7,371.4 293.3,370.4 291.4,379.8 285.8,379.8 282.1,381.6 278.3,376 274.6,366.7 274.6,361.1" fill="#d5edf7" stroke="#6f8a9a" stroke-width="1"/>
<polygon points="293.3,370.4 300.7,371.4 303.5,374.2 308.2,379.8 313.8,387.2 312.9,394.7 305.4,396.6 304.5,391 298.9,385.4 291.4,379.8" fill="#d5edf7" stroke="#6f8a9a" stroke-width="1"/>
<polygon points="309.1,402.2 319.4,412.5 317.6,418.1 309.1,417.1 308.2,409.7" fill="#d5edf7" stroke="#6f8a9a" stroke-width="1"/>
<polygon points="282.1,381.7 285.8,379.8 291.4,379.8 298.9,385.4 304.5,391 305.4,396.6 312.9,394.7 309.1,402.2 308.2,409.7 309.1,417.2 314.8,421.8 313.8,428.7 306.3,431.5 303.5,438.1 304.5,443.7 300.7,447.4 304.5,453 303.5,458.6 300.7,462.4 304.5,465.2 309.1,469.8 312.9,470.8 308.2,472.6 300.7,468.9 297,465.2 293.3,460.5 291.4,451.1 289.5,441.8 286.7,432.5 284.9,419.4 283.9,417.2 282.1,402.2 280.2,391" fill="#d5edf7" stroke="#6f8a9a" stroke-width="1"/>
<polygon points="272.7,366.7 274.6,366.7 278.3,376.1 282.1,381.7 280.2,391 282.1,402.2 283.9,417.2 284.9,419.4 286.7,432.5 289.5,441.8 291.4,451.1 293.3,460.5 297,465.2 300.7,468.9 308.2,472.6 304.5,471.7 298.9,469.8 291.4,465.2 285.8,456.8 283,447.4 282.1,438.1 280.2,430.6 278.3,424.6 277.4,407.8 275.5,391 273.7,376.1" fill="#d5edf7" stroke="#6f8a9a" stroke-width="1"/>
<polygon points="319.4,463.3 324.1,462.4 323.2,465.2 319.4,465.7" fill="#7998b7"/>
<polygon points="364.2,468.9 368,468.9 368,471.3 365.2,470.8" fill="#7998b7"/>
<polygon points="184.9,519.7 199.9,514.7 213,510.9 274.6,510 278.3,507.2 319.4,507.2 325,501.6 321.3,501.6 326.9,496.9 325,496 335.3,491.3 329.7,496.9 338.1,503.4 341.8,506.2 340,509 330.6,510.9 317.5,512.8 328.8,515.6 343.7,516.5 358.6,516.1 362.4,513.7 369.9,513.7 373.6,515.6 384.8,515.6 388.4,514 408,510.4 419.2,504.8 426.2,503.4 480.8,504.2 492,500 503.2,500.6 522.8,496.4 553.6,498.3 546.6,506.2 562,500.6 576,497.8 604,496.4 626.4,495.5 633.4,497.2 671.2,495.8 710.4,504.8 688,513.2 675.4,516 696.4,518.8 696.4,519.7" fill="#deebf1"/>
<polygon points="783.8,366 787.6,377.2 789.4,388.4 790.4,397.8 789.4,407.1 783.8,418.3 774.5,429.5 763.3,437 752.1,435.1 744.6,429.5 737.1,414.6 731.5,409.9 720.3,411.8 711,415.5 699.8,418.3 693.2,417.4 696,410.9 699.8,392.2 698.8,390.3 702.6,381.9 711,375.4 722.2,369.8 726.2,364 730,360 737.5,355 740,353.1 742.5,355 748.8,350 750,345 757.5,346.2 763.8,347.5 763.1,351.2 760.6,355 766.9,361.9 773.1,355 775.6,350 777.5,343.8 779.4,344.4 780.6,351.2 782.5,356.2 783.1,364" fill="#d5edf7" stroke="#6f8a9a" stroke-width="1"/>
<polygon points="71,241 75,243 75,247 71,246" fill="#7998b7"/>
<polygon points="217,308 220,308 220,310.5 217.5,310.5" fill="#8eaebf"/>
<polyline points="465.6,146.2 465,150 466.9,155 475,158.1 483.8,156.2 485,150 483.8,146.2 476.2,145.6" fill="none" stroke="#6f8a9a" stroke-width="1"/>
<polyline points="483.8,146.2 490,142.5 496.2,143.8 500,148.8 497.5,152.5 485,152.5" fill="none" stroke="#6f8a9a" stroke-width="1"/>
<polyline points="479.4,139 485,139.8 491.2,138.1" fill="none" stroke="#6f8a9a" stroke-width="0.8"/>
<polyline points="478.8,142.2 485,143.1 490,141.9" fill="none" stroke="#6f8a9a" stroke-width="0.8"/>
<polyline points="485,152.5 484.4,156.2 485,160 492.5,161.2 497.5,162.5 500,167.5" fill="none" stroke="#6f8a9a" stroke-width="1"/>
<polyline points="463.8,158.1 466.9,155" fill="none" stroke="#6f8a9a" stroke-width="1"/>
<polyline points="465,161.2 470,160 475,161.9 482.5,161.2 483.8,158.8 475,158.1" fill="none" stroke="#6f8a9a" stroke-width="1"/>
<polyline points="482.5,161.2 483.8,163.8 485,160" fill="none" stroke="#6f8a9a" stroke-width="1"/>
<polyline points="460,163.1 465,161.2" fill="none" stroke="#6f8a9a" stroke-width="1"/>
<polyline points="459.4,165.6 462.5,165.6 470,165 472.5,167.5 480,167.5 483.8,163.8" fill="none" stroke="#6f8a9a" stroke-width="1"/>
<polyline points="470,165 472.5,161.2" fill="none" stroke="#6f8a9a" stroke-width="0.8"/>
<polyline points="453.1,162.5 460,163.1 459.4,165.6 453.8,166.2" fill="none" stroke="#6f8a9a" stroke-width="0.8"/>
<polyline points="481.2,167.5 485,170 490,173.1 499.4,172.5" fill="none" stroke="#6f8a9a" stroke-width="1"/>
<polyline points="490,173.1 487.5,176.2 491.2,178.1 499,177.5" fill="none" stroke="#6f8a9a" stroke-width="1"/>
<polyline points="466.2,167.5 472.5,167.5 480,170 481.2,167.5" fill="none" stroke="#6f8a9a" stroke-width="0.8"/>
<polyline points="472.5,170 477.5,173.8 480,170" fill="none" stroke="#6f8a9a" stroke-width="0.8"/>
<polyline points="477.5,173.8 480,177.5 485,178.1 487.5,176.2" fill="none" stroke="#6f8a9a" stroke-width="0.8"/>
<polyline points="480,177.5 480,181.2 483.8,183.1" fill="none" stroke="#6f8a9a" stroke-width="0.8"/>
<polyline points="446.2,151.5 451.9,148.1" fill="none" stroke="#6f8a9a" stroke-width="0.8"/>
<polyline points="447.5,155 449.4,152.5 451.2,155" fill="none" stroke="#6f8a9a" stroke-width="0.8"/>
<polyline points="453.8,141.2 458.1,143.8" fill="none" stroke="#6f8a9a" stroke-width="0.6"/>
<polyline points="465,144.4 462.5,137.5 465,128.8 468.8,120 475,115 480,116.9" fill="none" stroke="#6f8a9a" stroke-width="0.9"/>
<polyline points="423.8,175.6 423.1,185 421.9,192.5" fill="none" stroke="#6f8a9a" stroke-width="0.9"/>
<polygon points="810.5,324.8 813.1,326.6 816.6,331.8 814.9,332.7 811.4,327.4" fill="#8eaebf"/>
<polygon points="817.5,332.7 821.8,336.1 825.3,340.5 823.6,341.7 819.2,337" fill="#8eaebf"/>
<polygon points="833.7,356.2 835.4,357 834.9,361.4 833.7,360.5" fill="#8eaebf"/>
<polygon points="834.9,364 836.1,364.9 835.8,370.1 834.7,369.2" fill="#8eaebf"/>
<polygon points="821.5,373.2 823.6,374.5 827.1,379.7 825.3,380.5 822.2,376.2" fill="#8eaebf"/>
<polygon points="828.5,374.5 830.2,375.3 829.7,377.9 828.3,377.1" fill="#8eaebf"/>
<polygon points="855.8,365.7 860.1,362.3 864.5,360 862.8,363.1 857.5,368.4 855.8,369.2" fill="#8eaebf"/>
<polygon points="803.6,344 804.8,344.3 804.4,347.1 803.4,346.6" fill="#8eaebf"/>
<polygon points="731.2,170 736.2,171.9 741.2,174.4 739.4,176.9 735.6,176.9 732.5,175" fill="#93ccfa" stroke="#6f8a9a" stroke-width="1"/>
<polygon points="736.9,179.4 741.2,182.5 743.8,186.9 742.5,191.2 746.2,193.8 747.5,196.9 743.8,199.4 738.8,200 736.2,203.1 733.1,202.5 731.2,205 732.5,208.1 730,208.1 726.9,204.4 727.5,200 731.2,196.9 735,196.2 736.2,192.5 738.8,190 738.1,185 736.2,181.9" fill="#93ccfa" stroke="#6f8a9a" stroke-width="1"/>
<polygon points="713.1,150.6 717.5,152.5 726.2,159.4 732.5,166.9 730,166.2 723.8,160.6 716.2,153.8" fill="#aad3df" stroke="#6f8a9a" stroke-width="0.8"/>
<polyline points="741.2,172.5 744.4,168.8 747.5,166.2" fill="none" stroke="#6f8a9a" stroke-width="0.7"/>
<polygon points="692.5,186.9 695.6,182.2 700,186.2 705.6,181.9 711.9,177.5 713.8,181.2 712.5,185.6 709.4,188.8 706.9,185.6 703.8,190 700,189" fill="#d5edf7" stroke="#6f8a9a" stroke-width="1"/>
<polygon points="712.5,186.9 715.6,187.5 722.5,196.9 718.1,200 715.6,197.5 713.8,191.2" fill="#d5edf7" stroke="#6f8a9a" stroke-width="1"/>
<polygon points="526.2,176.9 533.8,177.5 540,178.8 544.4,180.6 545.6,184.4 542.5,186.2 538.8,185 535,186.9 533.8,181.9 530,178.8 526.2,180.6" fill="#d5edf7" stroke="#6f8a9a" stroke-width="1"/>
<polyline points="533.8,177.5 535,181.2 538.8,185" fill="none" stroke="#6f8a9a" stroke-width="0.8"/>
<polyline points="533.8,181.9 537.5,181.5 540,178.8" fill="none" stroke="#6f8a9a" stroke-width="0.8"/>
<polyline points="555,175 562.5,181.2 573.8,183.8 580,191.2" fill="none" stroke="#6f8a9a" stroke-width="0.9"/>
<polyline points="580,181.2 587.5,183.8 597.5,185" fill="none" stroke="#6f8a9a" stroke-width="0.9"/>
<polyline points="585,180 592.5,181.2 605,181.2" fill="none" stroke="#6f8a9a" stroke-width="0.9"/>
<polygon points="252.5,103.9 258.8,102.6 265,103.2 262.5,105.1 255,105.8" fill="#d5edf7" stroke="#6f8a9a" stroke-width="0.9"/>
<polygon points="266.2,102.6 273.8,101.8 280,102.6 277.5,104.5 270,105.1" fill="#d5edf7" stroke="#6f8a9a" stroke-width="0.9"/>
<polygon points="281.2,102 290,101.4 293.8,103.2 287.5,105.1 282.5,104.5" fill="#d5edf7" stroke="#6f8a9a" stroke-width="0.9"/>
<polygon points="270,107.6 275,106.4 280,107.6 277.5,110.8 272.5,110.8" fill="#d5edf7" stroke="#6f8a9a" stroke-width="0.9"/>
<polygon points="281.2,106.4 287.5,105.8 291.2,108.2 287.5,110.8 282.5,109.5" fill="#d5edf7" stroke="#6f8a9a" stroke-width="0.9"/>
<polygon points="272.5,112 278.8,112 281.2,115.1 276.2,117 273.1,115.1" fill="#d5edf7" stroke="#6f8a9a" stroke-width="0.9"/>
<polygon points="287.5,123.9 292.5,122.6 296.2,125.1 292.5,127.6 288.1,126.4" fill="#d5edf7" stroke="#6f8a9a" stroke-width="0.9"/>
<polygon points="237.5,110.8 242.5,108.9 248.8,109.5 250,112.6 243.8,114.5 238.8,113.2" fill="#d5edf7" stroke="#6f8a9a" stroke-width="0.9"/>
<polygon points="295,104.5 303.8,103.9 312.5,104.5 307.5,106.8 298.8,107" fill="#d5edf7" stroke="#6f8a9a" stroke-width="0.9"/>
<polygon points="303.8,125.8 310,126.8 313.1,130.8 308.8,130.1 305,128.2" fill="#d5edf7" stroke="#6f8a9a" stroke-width="0.9"/>
<polyline points="250,110.8 258.8,109.5 267.5,112 268.8,115.1 261.2,115.8 255,117.6 250,115.8 250,110.8" fill="none" stroke="#6f8a9a" stroke-width="0.9"/>
<polyline points="308.8,110.8 312.5,113.9 320,115.8 325,118.9" fill="none" stroke="#6f8a9a" stroke-width="0.8"/>
<polyline points="300,112 306.2,113.9 310,117 316.2,118.9" fill="none" stroke="#6f8a9a" stroke-width="0.8"/>
<polygon points="656.9,220 662.5,221.2 664.4,228.8 670,235 673.8,239.4 671.9,241.9 668.1,244.4 666.9,251.2 663.8,256.9 661.2,252.5 658.8,246.2 655,241.9 654.4,236.2 656.2,231.2 655.6,225" fill="#d5edf7" stroke="#6f8a9a" stroke-width="1"/>
<polygon points="668.1,244.4 671.9,241.9 673.8,245 676.9,250 682.5,249.4 686.2,252.5 689.4,257.5 690,262.5 683.8,263.1 681.9,266.2 677.5,264.4 675.6,267.5 676.2,273.8 674.4,277.5 676.9,282.5 681.2,287.5 683.8,290 681.2,290 676.2,285 673.1,280 673.8,273.8 673.1,268.8 670.6,262.5 669.4,256.2 667.5,251.2" fill="#b0dcf0" stroke="#6f8a9a" stroke-width="1"/>
<polygon points="673.8,239.4 677.5,240 681.2,243.8 683.8,246.2 687.5,252.5 692.5,258.8 693.8,262.5 690,262.5 689.4,257.5 686.2,252.5 682.5,249.4 676.9,250 673.8,245 671.9,241.9" fill="#d5edf7" stroke="#6f8a9a" stroke-width="1"/>
<polygon points="677.5,235.6 682.5,233.8 687.5,236.9 688.1,240 686.2,245 690,251.2 695,256.2 698.8,263.8 698.8,270 695,275 690,280 688.8,276.9 692.5,272.5 695,268.8 694.4,262.5 692.5,258.8 687.5,252.5 683.8,246.2 681.2,243.8 677.5,240" fill="#b0dcf0" stroke="#6f8a9a" stroke-width="1"/>
<polygon points="683.8,263.1 690,262.5 693.8,262.5 694.4,267.5 692.5,272.5 687.5,273.8 683.8,270 681.9,266.2" fill="#d5edf7" stroke="#6f8a9a" stroke-width="1"/>
<polygon points="693.8,245 698.1,244 698.8,246.2 695.6,248.5 693.8,247.5" fill="#7998b7" stroke="#6f8a9a" stroke-width="0.7"/>
<polygon points="716.2,227.5 718.8,226.9 719,236.2 716.9,235.6" fill="#6f8ca6"/>
<polygon points="721.9,249.4 725,247.8 727.5,249.4 727.5,257.5 726.2,261.9 723.1,260 721.2,255" fill="#b0dcf0" stroke="#6f8a9a" stroke-width="1"/>
<polygon points="732.5,280 738.8,277.5 742.5,281.2 741.2,287.5 737.5,288.8 731.9,285" fill="#b0dcf0" stroke="#6f8a9a" stroke-width="0.9"/>
<polygon points="725,264.4 730,263.1 733.8,265 732.5,267.5 727.5,266.9" fill="#b0dcf0" stroke="#6f8a9a" stroke-width="0.9"/>
<polygon points="730,268.1 736.2,267.5 737.5,272.5 735,276.2 731.9,273.8" fill="#b0dcf0" stroke="#6f8a9a" stroke-width="0.9"/>
<polygon points="727.5,270 730,270.6 730.6,274.4 728.1,273.8" fill="#b0dcf0" stroke="#6f8a9a" stroke-width="0.8"/>
<polygon points="718.8,280 723.8,271.9 725,272.5 720.6,280.6" fill="#8eaebf"/>
<polygon points="658.1,264.4 659.4,264.4 659.4,271.2 658.4,271.2" fill="#8eaebf"/>
<polygon points="739,275 740.2,275 740.2,277.2 739,277.2" fill="#8eaebf"/>
<polygon points="667.5,291.2 673.1,290.6 676.2,296.2 681.2,302.5 686.2,308.1 691.2,313.8 694.4,315 693.8,325 690,326.9 686.2,322.5 682.5,316.2 679.4,308.8 675,301.2 670.6,296.2" fill="#7998b7" stroke="#6f8a9a" stroke-width="1"/>
<polygon points="679.4,288.1 684.4,288.8 686.9,293.8 688.8,298.8 690,303.8 687.5,303.8 683.8,300 681.2,295 680,291.2" fill="#d5edf7" stroke="#6f8a9a" stroke-width="1"/>
<polygon points="700.6,302.5 705,303.8 712.5,301.2 717.5,296.2 721.2,295.6 722.5,301.2 724.4,304.4 721.9,308.8 721.2,313.8 718.1,320.6 715,320.6 713.8,318.8 705,318.8 703.8,312.5 700.6,308.8" fill="#7998b7" stroke="#6f8a9a" stroke-width="1"/>
<polygon points="703.8,302.5 706.2,299.4 712.5,295 717.5,288.8 720,286.9 724.4,290 723.1,293.1 721.2,295.6 717.5,296.2 712.5,301.2 705,303.8" fill="#d5edf7" stroke="#6f8a9a" stroke-width="1"/>
<polygon points="727.5,306.2 732.5,303.8 737.5,305 740,303.1 737.5,306.9 732.5,308.1 731.2,310 736.2,311.2 733.8,314.4 735,318.8 734.4,325 731.9,325.6 731.2,321.2 729.4,317.5 728.8,322.5 728.1,326.9 726.2,320 725.6,315 726.9,310" fill="#7998b7" stroke="#6f8a9a" stroke-width="0.9"/>
<polygon points="693.1,328.8 697.5,328.1 703.8,329.4 711.2,330.6 711.2,333.1 713.8,336.2 708.8,335.6 702.5,334.4 696.2,333.1 693.8,331.2" fill="#7998b7" stroke="#6f8a9a" stroke-width="0.9"/>
<polygon points="716.2,335.6 722.5,335 727.5,336.2 735,335 738.8,335.6 730,336.9 726.2,338.8 723.1,339.4 720.6,337.5" fill="#7998b7" stroke="#6f8a9a" stroke-width="0.8"/>
<polygon points="732.5,343.1 738.1,336.9 739.4,338.1 735,343.1" fill="#7998b7" stroke="#6f8a9a" stroke-width="0.7"/>
<polygon points="745.6,301.2 748.8,299.4 748.8,306.2 746.9,310 745.6,306.2" fill="#7998b7" stroke="#6f8a9a" stroke-width="0.7"/>
<polygon points="746.2,317.8 751.2,317.2 753.8,318.8 748.8,319.4" fill="#7998b7" stroke="#6f8a9a" stroke-width="0.6"/>
<polygon points="742.2,317.8 744,317.5 744,320.2 742.2,320.5" fill="#7998b7"/>
<polygon points="755,310 761.2,309.4 761.9,314.4 765,318.1 770,313.1 777.5,317.5 777.5,337.5 773.1,335 770,334.4 771.2,331.2 773.1,330 771.9,325 767.5,322.5 763.1,320 758.8,320.6 756.2,316.2" fill="#7998b7" stroke="#6f8a9a" stroke-width="1"/>
<polygon points="777.5,317.8 782.5,319.4 787.5,323.1 793.8,328.1 791.2,330 790,332.5 793.8,336.9 799.4,340.6 798.1,343.1 792.5,340.6 787.5,334.4 785,332.5 780,338.1 777.5,338.8" fill="#d5edf7" stroke="#6f8a9a" stroke-width="1"/>
<polygon points="795,326.9 801.2,325.6 805.6,321.2 806.9,322.5 803.8,327.5 797.5,329.4" fill="#d5edf7" stroke="#6f8a9a" stroke-width="0.8"/>
<polygon points="761.2,325.6 762.5,325.6 762.5,329 761.2,329" fill="#7998b7"/>
<polygon points="696.9,316.9 699.4,316.9 699.4,319.4 696.9,319.4" fill="#7998b7"/>
<polygon points="740.6,331.9 742.5,331.9 742.2,335 740.8,334.8" fill="#7998b7"/>
<polygon points="668.8,298.1 670,298.1 670.2,300.6 669,300.6" fill="#8eaebf"/>
<polygon points="672.5,303.8 673.8,303.8 674,306.2 672.8,306.2" fill="#8eaebf"/>
<polygon points="675.6,309.4 676.9,309.4 677.1,311.9 675.9,311.9" fill="#8eaebf"/>
<polygon points="678.1,315 679.4,315 679.6,317.5 678.4,317.5" fill="#8eaebf"/>
<polygon points="753.8,330.6 754.8,330.6 754.5,334.4 753.5,334.4" fill="#8eaebf"/>
<polygon points="183.1,207.8 186.2,208.8 200,208.8 203.8,215 208.8,213.8 211.2,221.2 213.8,225 211.9,230 211.2,237.5 211.2,241.2 213.8,245.6 217.5,248.8 222.5,248.1 225,243.8 227.5,241.2 235,239.4 233.8,243.1 231.2,247.5 228.8,251.2 225,251.2 223.8,255 220,260 218.1,257.5 213.8,255.6 210,257.5 201.2,252.5 193.8,247.5 191.2,243.8 192.5,235 190,228.8 186.9,225 185.6,218.8 184.4,212.5" fill="#93ccfa" stroke="#6f8a9a" stroke-width="1"/>
<polygon points="176.2,205.6 182.5,207.5 183.1,212.5 183.8,220 183.1,228.8 182.5,233.8 180.6,230 179.4,222.5 177.5,215 176,210" fill="#93ccfa" stroke="#6f8a9a" stroke-width="0.9"/>
<polygon points="220,260 223.8,255 225,251.2 228.8,251.2 228.1,255 231.2,256.9 236.2,256.2 240,260 239.4,265 238.1,270 238.8,273.8 240.6,277.5 245,279 250,280 257.5,281.2 256.2,283.8 250,283.1 245,285 240,282.5 237.5,279 232.5,275 233.8,273.8 231.2,267.5 228.8,265 225,264.4 222.5,261.9" fill="#d5edf7" stroke="#6f8a9a" stroke-width="1"/>
<polyline points="225,261.2 228.1,258.8 231.2,256.9" fill="none" stroke="#6f8a9a" stroke-width="0.8"/>
<polyline points="228.8,265 233.8,262.5 239.4,260" fill="none" stroke="#6f8a9a" stroke-width="0.8"/>
<polyline points="232.5,270 238.8,270" fill="none" stroke="#6f8a9a" stroke-width="0.8"/>
<polyline points="233.8,275 238.1,275" fill="none" stroke="#6f8a9a" stroke-width="0.8"/>
<polygon points="241.2,236.9 245,233.8 250,234.4 256.2,237.5 261.2,241.2 264.4,243.1 257.5,244.4 256.2,241.2 251.2,238.1 246.2,236.2 242.5,238.1" fill="#d5edf7" stroke="#6f8a9a" stroke-width="0.9"/>
<polygon points="264.4,246.9 266.2,244.4 273.8,243.8 275,247.5 271.2,250 265,250.6" fill="#d5edf7" stroke="#6f8a9a" stroke-width="0.9"/>
<polyline points="268.8,244.4 268.5,250.4" fill="none" stroke="#6f8a9a" stroke-width="0.8"/>
<polygon points="253.1,249 256.9,248.8 256.9,250.6 253.5,250.6" fill="#8eaebf"/>
<polygon points="278.8,248.8 283.1,249 282.9,250.4 279,250.2" fill="#8eaebf"/>
<polygon points="255.6,228.1 259.4,228.1 259.4,230.6 256.2,230.6" fill="#8eaebf"/>
<polygon points="259.8,221.5 261.9,221.5 261.9,223.8 260,223.8" fill="#8eaebf"/>
<polygon points="265,234.8 266.9,234.8 266.9,236.5 265,236.5" fill="#8eaebf"/>
<polygon points="266.2,239.8 268,239.8 268,241.5 266.2,241.5" fill="#8eaebf"/>
<polygon points="291,255 292.9,255 293.1,259.8 291.5,259.4" fill="#8eaebf"/>
<polygon points="295.6,264.8 297.2,264.8 297.2,266.5 295.6,266.5" fill="#8eaebf"/>
<polygon points="291.9,261.9 293.4,261.9 293.4,263.8 291.9,263.8" fill="#8eaebf"/>
<polygon points="88,151.2 90.5,151.2 90.5,152.6 88,152.6" fill="#8eaebf"/>
<polygon points="97,149.6 99.5,149.6 99.5,151 97,151" fill="#8eaebf"/>
<polygon points="103,148.6 106,148.6 106,150 103,150" fill="#8eaebf"/>
<polygon points="66,236.5 67.6,236.5 67.6,237.9 66,237.9" fill="#8eaebf"/>
<polygon points="69.4,240.6 71.4,240.6 71.4,242.2 69.4,242.2" fill="#8eaebf"/>
<polygon points="568,375 570.4,375 570.4,376.6 568,376.6" fill="#8eaebf"/>
<polygon points="572.5,374.2 574.5,374.2 574.5,375.6 572.5,375.6" fill="#8eaebf"/>
<polygon points="541.5,346.5 543.3,346.5 543.3,348.1 541.5,348.1" fill="#8eaebf"/>
<polygon points="544.5,349.5 546.1,349.5 546.1,350.9 544.5,350.9" fill="#8eaebf"/>
<polygon points="575.8,456.4 578.4,456.4 578.4,458.4 575.8,458.4" fill="#8eaebf"/>
<polygon points="579.6,466.5 581,466.5 581,467.9 579.6,467.9" fill="#8eaebf"/>
<polygon points="399.5,217.6 402,217.6 402,219.1 399.5,219.1" fill="#8eaebf"/>
<polygon points="403.5,216.8 405.5,216.8 405.5,218.2 403.5,218.2" fill="#8eaebf"/>
<polygon points="399.6,204 401.2,204 401.2,205.4 399.6,205.4" fill="#8eaebf"/>
<polygon points="384,255.8 385.6,255.8 385.6,257.2 384,257.2" fill="#8eaebf"/>
<polygon points="813.5,293 815.1,293 815.1,294.4 813.5,294.4" fill="#8eaebf"/>
<polygon points="824,311 825.4,311 825.4,312.4 824,312.4" fill="#8eaebf"/>
<polygon points="800,263.5 801.4,263.5 801.4,264.7 800,264.7" fill="#8eaebf"/>
<polygon points="488.8,196.2 494.8,196.2 494.8,197.7 488.8,197.7" fill="#8eaebf"/>
<polygon points="509.5,196.3 513.1,196.3 513.1,198.1 509.5,198.1" fill="#8eaebf"/>
<polygon points="535.9,165.8 539.4,163.9 546.4,163.6 548.5,168.3 546.6,173.3 550.7,176.8 553.2,183 555.4,189.8 550.4,191.3 545.7,187.7 541,180.4 537.8,174.1 535.6,168.6" fill="#acd5e2" stroke="#6f8a9a" stroke-width="1"/>
</svg>
</div>
<div class="abs" style="left:17px;top:66px;width:29px;height:59px;background:#fdfefe;border-radius:3px;box-shadow:0 1px 4px rgba(0,0,0,.3)">
<div class="abs" style="left:0;top:29px;width:29px;height:1px;background:#dcdfe2"></div>
<svg class="abs" style="left:0;top:0" width="29" height="59"><path d="M9.5 14.3H21.2M15.35 8.5V20.1M9.6 44.8H21.2" stroke="#111" stroke-width="2.4" fill="none"/></svg>
</div>
<div class="abs" style="left:61px;top:66px;width:171px;height:29px;background:#fdfefe;border-radius:3px;box-shadow:0 1px 4px rgba(0,0,0,.3)">
<div class="abs" style="left:11px;top:7px;width:8px;height:8px;background:#3b9cf0"></div>
<div class="abs" style="left:13px;top:17px;width:5.5px;height:5.5px;background:#9fc4ed"></div>
<div class="abs" style="left:20.5px;top:13.5px;width:5.5px;height:5.5px;background:#a9c8ee"></div>
<div class="t" style="left:31.5px;top:6.2px;font-size:15px;color:#2f3438">Shaded</div>
<div class="abs" style="left:90px;top:5px;width:1px;height:19px;background:#dde0e3"></div>
<div class="abs" style="left:98px;top:7.7px;width:13px;height:13px;border-radius:50%;background:radial-gradient(circle,#858585 0,#858585 2.6px,#dcdcdc 3.6px,#e6e6e6 6px,rgba(240,240,240,0) 6.6px)"></div>
<div class="t" style="left:117.3px;top:6.2px;font-size:15px;color:#7b7f83;letter-spacing:.3px">Points</div>
</div>
<div id="legend"><div class="lt" style="left:11px;top:6px">Millions</div>
<div class="lr" style="top:25px"><div class="sw" style="background:#d3e9f7"></div><div class="lt">&lt; 13.97</div></div>
<div class="lr" style="top:50px"><div class="sw" style="background:#d0e6f5"></div><div class="lt">13.97 - 43.77</div></div>
<div class="lr" style="top:75px"><div class="sw" style="background:#9cc9e9"></div><div class="lt">43.77 - 83.64</div></div>
<div class="lr" style="top:100px"><div class="sw" style="background:#6ab7f5"></div><div class="lt">83.64 - 174.17</div></div>
<div class="lr" style="top:125px"><div class="sw" style="background:#4a6e9b"></div><div class="lt">&gt; 174.17</div></div>
</div>
<div id="timeline"><div class="abs" style="left:189px;top:0;width:1px;height:56px;background:#e6e8ec"></div>
<div class="t" style="left:77.3px;top:21px;font-size:15.5px;font-weight:700;color:#474f57">2011</div>
<div class="abs" style="left:212px;top:26px;width:632px;height:4px;border-radius:2px;background:#dcdfe3"></div>
<div class="abs" style="left:696.5px;top:15.5px;width:26px;height:26px;border-radius:50%;background:#fff;border:1px solid #d5d8dc"></div>
<div class="abs" style="left:706.5px;top:24.5px;width:1px;height:8px;background:#c8ccd0"></div><div class="abs" style="left:709.5px;top:24.5px;width:1px;height:8px;background:#c8ccd0"></div><div class="abs" style="left:712.5px;top:24.5px;width:1px;height:8px;background:#c8ccd0"></div>
</div>
<div class="row" style="top:2.75px;height:47.75px"><div class="t" style="top:17.1px">Labor force, total</div></div>
<div class="row" style="top:51.5px;height:47.75px"><div class="t" style="top:17.1px">Population, total</div></div>
<div class="row" style="top:100.25px;height:47.75px"><div class="t" style="top:17.1px">Population, male</div></div>
<div class="row" style="top:149.0px;height:47.75px"><div class="t" style="top:17.1px">Population, male (% of total population)</div></div>
<div class="row" style="top:197.75px;height:47.75px"><div class="t" style="top:17.1px">Population, female (% of total population)</div></div>
<div class="row" style="top:246.5px;height:47.75px"><div class="t" style="top:17.1px">Population, female</div></div>
<div class="row" style="top:295.25px;height:47.75px"><div class="t" style="top:17.1px">International migrant stock, total</div></div>
<div class="row" style="top:344.0px;height:47.60000000000002px"><div class="t" style="top:17.1px">International migrant stock (% of population)</div></div>
<div class="abs" style="left:897px;top:50.5px;width:384px;height:1px;background:#f3f5f8"></div>
<div class="abs" style="left:897px;top:99.25px;width:384px;height:1px;background:#f3f5f8"></div>
<div class="abs" style="left:897px;top:148.0px;width:384px;height:1px;background:#f3f5f8"></div>
<div class="abs" style="left:897px;top:196.75px;width:384px;height:1px;background:#f3f5f8"></div>
<div class="abs" style="left:897px;top:245.5px;width:384px;height:1px;background:#f3f5f8"></div>
<div class="abs" style="left:897px;top:294.25px;width:384px;height:1px;background:#f3f5f8"></div>
<div class="abs" style="left:897px;top:343.0px;width:384px;height:1px;background:#f3f5f8"></div>
<svg class="abs" style="left:0;top:0" width="1286" height="400"><path d="M1234.3 31.8 Q1252 24 1266 20.3" fill="none" stroke="#3f6f96" stroke-width="1.2"/><circle cx="1269.2" cy="19.3" r="3.6" fill="#eef7fc"/><circle cx="1269.2" cy="19.3" r="2" fill="#3c6a88"/><path d="M1234.3 81.5 L1266 70.2" fill="none" stroke="#3f6f96" stroke-width="1.2"/><circle cx="1269" cy="69" r="3.6" fill="#eef7fc"/><circle cx="1269" cy="69" r="2" fill="#3c6a88"/><path d="M1234.2 129.4 L1266 118" fill="none" stroke="#3f6f96" stroke-width="1.2"/><circle cx="1268.9" cy="116.9" r="3.6" fill="#eef7fc"/><circle cx="1268.9" cy="116.9" r="2" fill="#3c6a88"/><path d="M1234.2 176.4 Q1252 175.2 1266 176.2" fill="none" stroke="#3f6f96" stroke-width="1.2"/><circle cx="1268.9" cy="176.2" r="3.6" fill="#eef7fc"/><circle cx="1268.9" cy="176.2" r="2" fill="#3c6a88"/><path d="M1234.2 218.3 Q1252 219.8 1266 219" fill="none" stroke="#3f6f96" stroke-width="1.2"/><circle cx="1268.9" cy="219" r="3.6" fill="#eef7fc"/><circle cx="1268.9" cy="219" r="2" fill="#3c6a88"/><path d="M1234.1 277.2 L1266.5 265.4" fill="none" stroke="#3f6f96" stroke-width="1.2"/><circle cx="1269.5" cy="264.3" r="3.6" fill="#eef7fc"/><circle cx="1269.5" cy="264.3" r="2" fill="#3c6a88"/><circle cx="1256.4" cy="312.2" r="3.6" fill="#eef7fc"/><circle cx="1256.4" cy="312.2" r="2" fill="#3c6a88"/><circle cx="1256.1" cy="365.6" r="3.6" fill="#eef7fc"/><circle cx="1256.1" cy="365.6" r="2" fill="#3c6a88"/></svg>
<div id="cards"><div class="abs" style="left:0;top:71.6px;width:384px;height:1px;background:#e6e9ed"></div><div class="abs" style="left:0;top:143.6px;width:384px;height:1px;background:#e6e9ed"></div></div>
<div class="circ" style="left:912px;top:414.7px"></div>
<div class="circ" style="left:912px;top:487.4px"></div>
<div class="circ" style="left:912px;top:559.5px"></div>
<svg class="abs" style="left:925px;top:428px" width="28" height="28" viewBox="0 0 28 28"><path d="M3.8 14.5V23H23.4V14.5" fill="none" stroke="#7d9db4" stroke-width="2.6"/><path d="M13.6 3V15" stroke="#7d9db4" stroke-width="2.6"/><path d="M8.2 10.8L13.6 16.6L19 10.8Z" fill="#7d9db4"/></svg>
<svg class="abs" style="left:924px;top:499.6px" width="30" height="30" viewBox="0 0 30 30"><g fill="#7d9db4"><path d="M2.2 7.2C2.2 4.2 7.8 2.2 14.6 2.2S27 4.2 27 7.2 21.4 12.2 14.6 12.2 2.2 10.2 2.2 7.2Z"/><path d="M2.2 10.6C4 13.2 9 14.4 14.6 14.4S25.200 13.2 27 10.600V14.600C27 17.4 21.4 19.4 14.6 19.4S2.2 17.4 2.2 14.6Z"/><path d="M2.2 17.8C4 20.400 9 21.600 14.6 21.600S25.200 20.400 27 17.800V21.800C27 24.600 21.400 26.600 14.600 26.600S2.200 24.600 2.200 21.800Z"/></g></svg>
<svg class="abs" style="left:926px;top:574px" width="26" height="22" viewBox="0 0 26 22"><rect x="1.3" y="1.8" width="22.8" height="18" rx="1.6" fill="#7d9db4"/><g fill="#fff"><rect x="3.6" y="6" width="5" height="3"/><rect x="10.2" y="6" width="5" height="3"/><rect x="16.800" y="6" width="5" height="3"/><rect x="3.6" y="10.600" width="5" height="3"/><rect x="10.200" y="10.600" width="5" height="3"/><rect x="16.800" y="10.600" width="5" height="3"/><rect x="3.600" y="15.200" width="5" height="3"/><rect x="10.200" y="15.200" width="5" height="3"/><rect x="16.800" y="15.200" width="5" height="3"/></g></svg>
<svg class="abs" style="left:954px;top:492px" width="11" height="11" viewBox="0 0 11 11"><path d="M4.6 1.2H0.9V9.800H9.600V6.200" fill="none" stroke="#3b4248" stroke-width="1.2"/><path d="M4.6 6.200L9.400 1.300" stroke="#3b4248" stroke-width="1.300"/><path d="M6.200 0.600H10.200V4.600Z" fill="#3b4248"/></svg>
<svg class="abs" style="left:954px;top:564.2px" width="11" height="11" viewBox="0 0 11 11"><path d="M4.6 1.2H0.9V9.800H9.600V6.200" fill="none" stroke="#3b4248" stroke-width="1.2"/><path d="M4.6 6.200L9.400 1.300" stroke="#3b4248" stroke-width="1.300"/><path d="M6.200 0.600H10.200V4.600Z" fill="#3b4248"/></svg>
<div class="t h" style="left:984.5px;top:420.3px;font-size:17.6px">Download</div>
<a class="l" style="left:984.6px;top:446px;letter-spacing:-1.1px">CSV</a>
<a class="l" style="left:1025.7px;top:446px;letter-spacing:.2px">XML</a>
<a class="l" style="left:1070.9px;top:446px;letter-spacing:-.9px">EXCEL</a>
<div class="t h" style="left:984.5px;top:493.4px;font-size:17.6px">DataBank</div>
<div class="t sub" style="left:984.6px;top:516.5px;letter-spacing:-.02px">Explore Our DataBank</div>
<div class="t h" style="left:984.5px;top:564.7px;font-size:17.6px;letter-spacing:-.2px">WDI Tables</div>
<div class="t sub" style="left:984.6px;top:590.4px">Thematic data tables from WDI</div>
</body></html>
